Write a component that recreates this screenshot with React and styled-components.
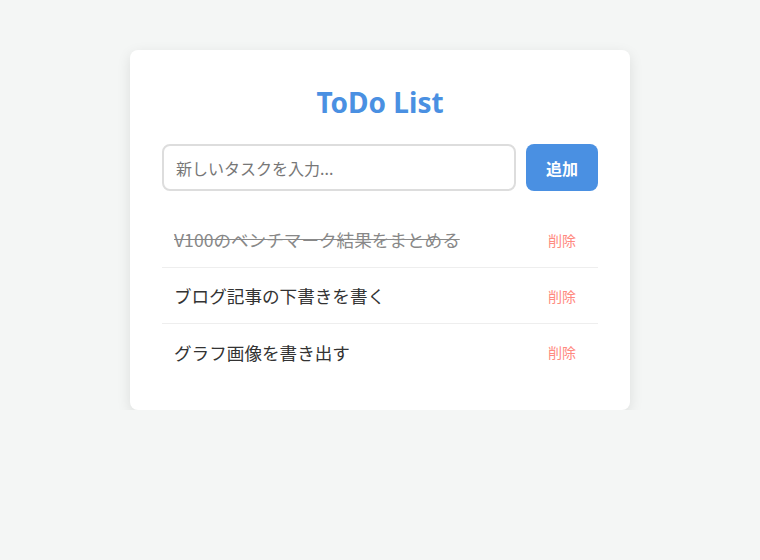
import React, { useState } from "react";
import styled, { createGlobalStyle } from "styled-components";

const GlobalStyle = createGlobalStyle`
    body {
        margin: 0;
        background: #f4f6f5;
        font-family: "Segoe UI", "Noto Sans", "Noto Sans CJK JP", sans-serif;
    }
`

const Page = styled.div`
    display: flex;
    justify-content: center;
    padding-top: 50px;
`

const Card = styled.div`
    width: 500px;
    box-sizing: border-box;
    background: #fff;
    border-radius: 8px;
    padding: 35px 32px 30px;
    box-shadow: 0 4px 14px rgba(0, 0, 0, 0.1);
`

const Title = styled.h1`
    margin: 0 0 25px;
    text-align: center;
    color: #4a90e2;
    font-family: "Noto Sans", sans-serif;
    font-size: 28px;
    font-weight: 700;
    line-height: 34px;
`

const Form = styled.form`
    display: flex;
    gap: 10px;
    margin-bottom: 21px;
`

const Input = styled.input`
    flex: 1;
    height: 47px;
    box-sizing: border-box;
    padding: 0 12px;
    border: 2px solid #ddd;
    border-radius: 8px;
    font-family: "Noto Sans CJK JP", sans-serif;
    font-size: 16px;
    color: #333;
    outline: none;

    &::placeholder {
        color: #777;
    }
`

const AddButton = styled.button`
    width: 72px;
    height: 47px;
    border: none;
    border-radius: 8px;
    background: #4a90e2;
    color: #fff;
    font-family: "Noto Sans CJK JP", sans-serif;
    font-size: 16px;
    font-weight: 700;
    cursor: pointer;
`

const List = styled.ul`
    list-style: none;
    margin: 0;
    padding: 0;
`

const Item = styled.li`
    display: flex;
    align-items: center;
    justify-content: space-between;
    height: 56px;
    box-sizing: border-box;
    padding: 0 12px;
    border-bottom: 1px solid #eee;

    &:last-child {
        border-bottom: none;
    }
`

const Text = styled.span`
    font-family: "Noto Sans CJK JP", sans-serif;
    font-size: 17.6px;
    color: ${({ done }) => (done ? "#888" : "#333")};
    text-decoration: ${({ done }) => (done ? "line-through" : "none")};
    cursor: pointer;
`

const DeleteButton = styled.button`
    background: none;
    border: none;
    padding: 4px 10px;
    color: #ff8a80;
    font-family: "Noto Sans CJK JP", sans-serif;
    font-size: 14px;
    cursor: pointer;
`

const initialTodos = [
    { id: 1, text: "V100のベンチマーク結果をまとめる", done: true },
    { id: 2, text: "ブログ記事の下書きを書く", done: false },
    { id: 3, text: "グラフ画像を書き出す", done: false },
]

const App = () => {
    const [todos, setTodos] = useState(initialTodos);
    const [value, setValue] = useState("");

    const addTodo = (e) => {
        e.preventDefault();
        if (!value.trim()) return;
        setTodos([...todos, { id: Date.now(), text: value, done: false }]);
        setValue("");
    };

    const toggle = (id) =>
        setTodos(todos.map((t) => (t.id === id ? { ...t, done: !t.done } : t)));
    const remove = (id) => setTodos(todos.filter((t) => t.id !== id));

    return (
        <React.Fragment>
            <GlobalStyle />
            <Page>
                <Card>
                    <Title>ToDo List</Title>
                    <Form onSubmit={addTodo}>
                        <Input
                            placeholder="新しいタスクを入力..."
                            value={value}
                            onChange={(e) => setValue(e.target.value)}
                        />
                        <AddButton type="submit">追加</AddButton>
                    </Form>
                    <List>
                        {todos.map((todo) => (
                            <Item key={todo.id}>
                                <Text done={todo.done} onClick={() => toggle(todo.id)}>
                                    {todo.text}
                                </Text>
                                <DeleteButton onClick={() => remove(todo.id)}>削除</DeleteButton>
                            </Item>
                        ))}
                    </List>
                </Card>
            </Page>
        </React.Fragment>
    );
}

export default App;
